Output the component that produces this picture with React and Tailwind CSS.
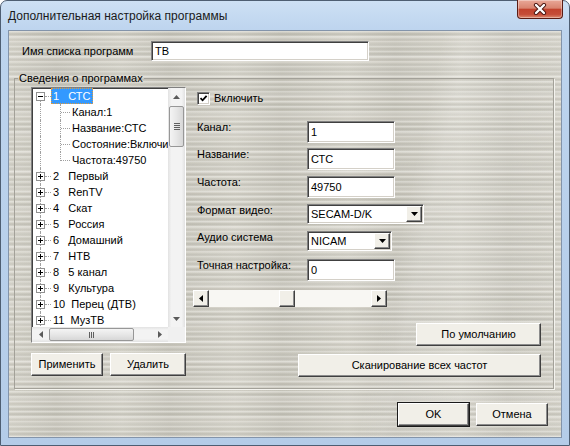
import React from "react";

const sunken =
  "bg-white border border-t-[#808080] border-l-[#808080] border-r-white border-b-white shadow-[inset_1px_1px_0_#404040,inset_-1px_-1px_0_#d4d0c8]";
const raised =
  "bg-[#f1efe8] border border-t-white border-l-white border-r-[#404040] border-b-[#404040] shadow-[inset_-1px_-1px_0_#8c8c8c]";

const channels = [
  "2   Первый",
  "3   RenTV",
  "4   Скат",
  "5   Россия",
  "6   Домашний",
  "7   НТВ",
  "8   5 канал",
  "9   Культура",
  "10  Перец (ДТВ)",
  "11  МузТВ",
];
const details = ["Канал:1", "Название:СТС", "Состояние:Включи", "Частота:49750"];

function Tri({ dir, color = "#000" }) {
  if (dir === "up")
    return (
      <svg width="7" height="4" viewBox="0 0 7 4">
        <path d="M0 4L3.5 0L7 4Z" fill={color} />
      </svg>
    );
  if (dir === "down")
    return (
      <svg width="7" height="4" viewBox="0 0 7 4">
        <path d="M0 0L3.5 4L7 0Z" fill={color} />
      </svg>
    );
  if (dir === "left")
    return (
      <svg width="4" height="7" viewBox="0 0 4 7">
        <path d="M4 0L0 3.5L4 7Z" fill={color} />
      </svg>
    );
  return (
    <svg width="4" height="7" viewBox="0 0 4 7">
      <path d="M0 0L4 3.5L0 7Z" fill={color} />
    </svg>
  );
}

function Btn({ children, className = "" }) {
  return (
    <button className={`${raised} flex items-center justify-center text-[11px] leading-[13px] text-black ${className}`}>
      {children}
    </button>
  );
}

function Field({ value, w, h = "h-[22px]" }) {
  return (
    <div className={`${sunken} ${h} ${w} flex items-center pl-[3px] text-black`}>{value}</div>
  );
}

function Combo({ value, w }) {
  return (
    <div className={`${sunken} h-[20px] ${w} flex items-center pl-[3px] pr-[1px]`}>
      <span className="flex-1">{value}</span>
      <span className={`${raised} w-[16px] h-[16px] flex items-center justify-center`}>
        <Tri dir="down" />
      </span>
    </div>
  );
}

function TopRow({ label, open, selected, first }) {
  return (
    <div className="relative h-[16px] flex items-center whitespace-pre">
      <span
        className={`absolute left-[8px] ${first ? "top-[8px]" : "top-0"} bottom-0 border-l border-dotted border-[#a0a0a0]`}
      />
      <span className="absolute left-[13px] top-[8px] w-[6px] border-t border-dotted border-[#a0a0a0]" />
      <span className="absolute left-[4px] top-[4px] w-[9px] h-[9px] border border-[#919191] bg-white">
        <span className="absolute left-[1px] top-[3px] w-[5px] h-px bg-black" />
        {!open && <span className="absolute left-[3px] top-[1px] w-px h-[5px] bg-black" />}
      </span>
      <span
        className={`ml-[19px] h-[16px] flex items-center px-[1px] border ${
          selected ? "bg-[#3399ff] text-white border-dotted border-[#e09a3c]" : "border-transparent"
        }`}
      >
        {label}
      </span>
    </div>
  );
}

function ChildRow({ label, last }) {
  return (
    <div className="relative h-[16px] flex items-center whitespace-pre">
      <span className="absolute left-[8px] top-0 bottom-0 border-l border-dotted border-[#a0a0a0]" />
      <span
        className={`absolute left-[28px] top-0 ${last ? "h-[9px]" : "bottom-0"} border-l border-dotted border-[#a0a0a0]`}
      />
      <span className="absolute left-[29px] top-[8px] w-[9px] border-t border-dotted border-[#a0a0a0]" />
      <span className="ml-[40px]">{label}</span>
    </div>
  );
}

function VScroll() {
  return (
    <div className="w-[17px] h-full bg-[linear-gradient(90deg,#e2e2e2,#f3f3f3_20%,#f3f3f3_80%,#e2e2e2)] flex flex-col items-center">
      <div className="h-[17px] flex items-center justify-center">
        <Tri dir="up" color="#5a5a5a" />
      </div>
      <div className="w-[15px] h-[41px] mt-[1px] rounded-[2px] border border-[#979797] bg-[linear-gradient(90deg,#f4f4f4,#e7e7e7_50%,#d7d7d7)] flex flex-col items-center justify-center gap-[1px]">
        <span className="w-[6px] h-px bg-[#5f5f5f]" />
        <span className="w-[6px] h-px bg-[#5f5f5f]" />
        <span className="w-[6px] h-px bg-[#5f5f5f]" />
        <span className="w-[6px] h-px bg-[#5f5f5f]" />
      </div>
      <div className="flex-1" />
      <div className="h-[17px] flex items-center justify-center">
        <Tri dir="down" color="#5a5a5a" />
      </div>
    </div>
  );
}

function HScroll() {
  return (
    <div className="flex-1 h-full bg-[linear-gradient(180deg,#e2e2e2,#f3f3f3_20%,#f3f3f3_80%,#e2e2e2)] flex items-center">
      <div className="w-[17px] flex items-center justify-center">
        <Tri dir="left" color="#5a5a5a" />
      </div>
      <div className="w-[85px] h-[13px] rounded-[2px] border border-[#979797] bg-[linear-gradient(180deg,#f4f4f4,#e7e7e7_50%,#d7d7d7)] flex items-center justify-center gap-[1px]">
        <span className="h-[6px] w-px bg-[#5f5f5f]" />
        <span className="h-[6px] w-px bg-[#5f5f5f]" />
        <span className="h-[6px] w-px bg-[#5f5f5f]" />
      </div>
      <div className="flex-1" />
      <div className="w-[17px] flex items-center justify-center">
        <Tri dir="right" color="#5a5a5a" />
      </div>
    </div>
  );
}

function Tree() {
  return (
    <div className={`${sunken} w-[155px] h-[256px] flex flex-col`}>
      <div className="flex flex-1 min-h-0">
        <div className="flex-1 overflow-hidden text-black">
          <TopRow label="1   СТС" open selected first />
          {details.map((d, i) => (
            <ChildRow key={d} label={d} last={i === details.length - 1} />
          ))}
          {channels.map((c) => (
            <TopRow key={c} label={c} />
          ))}
        </div>
        <VScroll />
      </div>
      <div className="h-[15px] flex">
        <HScroll />
        <div className="w-[17px] bg-[#f0f0f0]" />
      </div>
    </div>
  );
}

function Row({ label, children, className = "" }) {
  return (
    <div className={`flex items-start pl-[4px] ${className}`}>
      <span className="w-[110px]">{label}</span>
      {children}
    </div>
  );
}

export default function App() {
  return (
    <div className="w-[570px] h-[446px] font-['Liberation_Sans','DejaVu_Sans',sans-serif] text-[11px] leading-[13px] text-black bg-[linear-gradient(180deg,#cde0f4_0px,#bdd4ee_30px,#b4cce8_100%)] border border-[#4e5e72] rounded-t-[7px] flex flex-col">
      <div className="h-[29px] flex items-start justify-between">
        <span className="ml-[7px] mt-[8px] text-[12px] leading-[15px] text-[#1a1a1a]">
          Дополнительная настройка программы
        </span>
        <div className="w-[46px] h-[19px] mr-[6px] -mt-px rounded-b-[4px] border border-t-0 border-[#5a1c14] bg-[linear-gradient(180deg,#e9a898_0%,#d98470_45%,#c2432e_52%,#c54d38_80%,#dc8a70_100%)] shadow-[inset_0_0_0_1px_rgba(255,255,255,0.35)] flex items-center justify-center">
          <svg width="14" height="12" viewBox="0 0 14 12">
            <path d="M3 2L11 10M11 2L3 10" stroke="#4a1510" strokeWidth="4.2" strokeLinecap="round" />
            <path d="M3 2L11 10M11 2L3 10" stroke="#ffffff" strokeWidth="2.4" strokeLinecap="round" />
          </svg>
        </div>
      </div>

      <div className="mx-[7px] h-[408px] border border-[#8394aa] bg-[image:linear-gradient(102deg,rgba(255,255,255,0)_68%,rgba(255,255,255,0.12)_72%,rgba(255,255,255,0.05)_90%),repeating-linear-gradient(180deg,rgba(255,255,255,0.35)_0px,rgba(255,255,255,0)_2px,rgba(0,0,0,0.07)_3px,rgba(255,255,255,0)_5px),repeating-linear-gradient(90deg,rgba(255,255,255,0.08)_0px,rgba(0,0,0,0.04)_47px,rgba(255,255,255,0.08)_113px),repeating-linear-gradient(180deg,#d6d4ca_0px,#cbc9be_3px,#dddbd2_7px,#cecbc0_11px,#d9d7cd_13px,#cdcbc0_17px,#d6d4ca_19px)] flex flex-col">
        <div className="flex items-center mt-[10px] ml-[13px]">
          <span className="w-[129px]">Имя списка программ</span>
          <Field value="ТВ" w="w-[218px]" h="h-[20px]" />
        </div>

        <fieldset className="mt-[11px] ml-[5px] w-[540px] h-[317px] border border-[#a3a199] shadow-[1px_1px_0_#f4f3ee]">
          <legend className="ml-[3px] px-[1px] text-[11px] leading-[13px]">Сведения о программах</legend>
          <div className="flex pl-[16px] pt-[2px]">
            <div className="flex flex-col">
              <Tree />
              <div className="flex gap-[7px] mt-[10px]">
                <Btn className="w-[72px] h-[23px]">Применить</Btn>
                <Btn className="w-[76px] h-[23px]">Удалить</Btn>
              </div>
            </div>

            <div className="ml-[7px] w-[348px] flex flex-col">
              <div className="flex items-center gap-[4px] mt-[5px] pl-[4px]">
                <span className={`${sunken} w-[13px] h-[13px] flex items-center justify-center`}>
                  <svg width="9" height="9" viewBox="0 0 9 9">
                    <path d="M1.5 4.2L3.6 6.3L7.6 1.8" stroke="#000" strokeWidth="1.8" fill="none" />
                  </svg>
                </span>
                <span>Включить</span>
              </div>

              <Row label="Канал:" className="mt-[16px]">
                <Field value="1" w="w-[88px]" />
              </Row>
              <Row label="Название:" className="mt-[5px]">
                <Field value="СТС" w="w-[88px]" />
              </Row>
              <Row label="Частота:" className="mt-[6px]">
                <Field value="49750" w="w-[88px]" />
              </Row>
              <Row label="Формат видео:" className="mt-[6px]">
                <Combo value="SECAM-D/K" w="w-[117px]" />
              </Row>
              <Row label="Аудио система" className="mt-[7px]">
                <Combo value="NICAM" w="w-[85px]" />
              </Row>
              <Row label="Точная настройка:" className="mt-[8px]">
                <Field value="0" w="w-[88px]" />
              </Row>

              <div className="mt-[9px] w-[194px] h-[17px] flex bg-[#f8f7f3]">
                <div className={`${raised} w-[16px] h-[17px] flex items-center justify-center`}>
                  <Tri dir="left" />
                </div>
                <div className="flex-1 flex">
                  <div className="w-[70px]" />
                  <div className={`${raised} w-[16px] h-[17px]`} />
                </div>
                <div className={`${raised} w-[16px] h-[17px] flex items-center justify-center`}>
                  <Tri dir="right" />
                </div>
              </div>

              <Btn className="self-end mt-[16px] w-[125px] h-[23px]">По умолчанию</Btn>
              <Btn className="self-end mt-[8px] w-[243px] h-[23px]">Сканирование всех частот</Btn>
            </div>
          </div>
        </fieldset>

        <div className="flex justify-end gap-[7px] pr-[13px] mt-[14px]">
          <Btn className="w-[71px] h-[23px] outline outline-1 outline-[#1a1a1a]">OK</Btn>
          <Btn className="w-[72px] h-[23px]">Отмена</Btn>
        </div>
      </div>
    </div>
  );
}
